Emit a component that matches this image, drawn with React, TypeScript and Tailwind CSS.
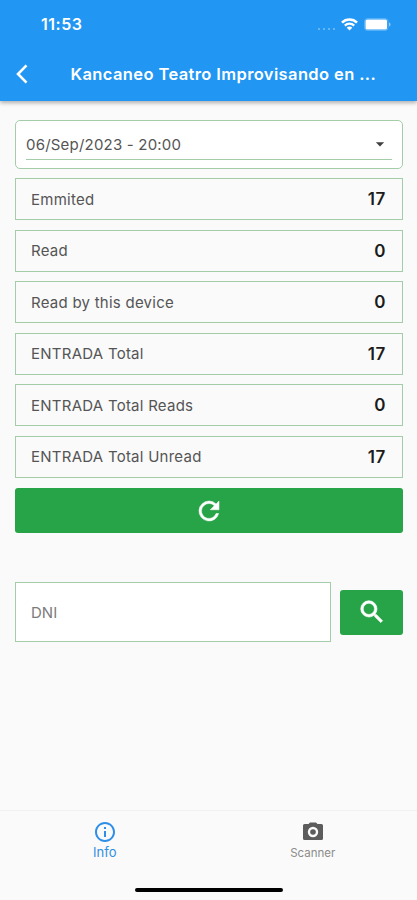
import React from 'react';
import { MdArrowDropDown, MdInfoOutline } from 'react-icons/md';

const stats = [
    { label: 'Emmited', value: 17 },
    { label: 'Read', value: 0 },
    { label: 'Read by this device', value: 0 },
    { label: 'ENTRADA Total', value: 17 },
    { label: 'ENTRADA Total Reads', value: 0 },
    { label: 'ENTRADA Total Unread', value: 17 },
];

const StatusBar = () => {
    return (
        <div className="flex h-12 items-center justify-between pl-[41px] pr-[26px]">
            <span className="text-[16px] leading-none font-semibold tracking-[0.5px]">11:53</span>
            <div className="flex items-center">
                <div className="mt-[9px] mr-[6px] flex gap-[3px]">
                    <i className="size-[2px] rounded-full bg-white/40" />
                    <i className="size-[2px] rounded-full bg-white/40" />
                    <i className="size-[2px] rounded-full bg-white/40" />
                    <i className="size-[2px] rounded-full bg-white/40" />
                </div>
                <svg className="mr-[6px] h-[13px] w-[17px]" viewBox="0 0 17 13" fill="none" stroke="currentColor">
                    <path d="M1 4.6a10.8 10.8 0 0 1 15 0" strokeWidth="2.6" />
                    <path d="M3.8 7.6a6.8 6.8 0 0 1 9.4 0" strokeWidth="2.2" />
                    <path d="M8.5 12.6 5.7 9.8a3.8 3.8 0 0 1 5.6 0z" fill="currentColor" stroke="none" />
                </svg>
                <svg className="h-[13px] w-[27px]" viewBox="0 0 27 13">
                    <rect x="0.5" y="0.5" width="23.5" height="12" rx="3" fill="none" stroke="#fff" strokeOpacity="0.25" />
                    <rect x="1.5" y="1.5" width="21.5" height="10" rx="1.5" fill="#fff" />
                    <path d="M25 4.5v4c1-.3 1.5-1 1.5-2s-.5-1.7-1.5-2z" fill="#fff" fillOpacity="0.5" />
                </svg>
            </div>
        </div>
    );
};

const Header = () => {
    return (
        <header className="h-[101px] bg-[#2196f3] text-white shadow-[0_2px_4px_rgba(0,0,0,0.3)]">
            <StatusBar />
            <div className="flex h-[52px] items-center pl-[15px]">
                <svg className="h-[20px] w-[13px]" viewBox="0 0 13 20" fill="none" stroke="currentColor" strokeWidth="2.6">
                    <path d="M11.5 1.3 3 10l8.5 8.7" />
                </svg>
                <h1 className="ml-[42.5px] text-[16.5px] font-semibold tracking-[0.38px] whitespace-nowrap">
                    Kancaneo Teatro Improvisando en ...
                </h1>
            </div>
        </header>
    );
};

const RefreshIcon = () => {
    return (
        <svg className="size-[30px]" viewBox="0 0 24 24" fill="currentColor" stroke="currentColor" strokeWidth="0.4">
            <path d="M17.65 6.35A7.96 7.96 0 0 0 12 4a8 8 0 1 0 7.73 10h-2.08A6 6 0 1 1 12 6c1.66 0 3.14.69 4.22 1.78L13 11h7V4z" />
        </svg>
    );
};

const SearchIcon = () => {
    return (
        <svg className="size-[30px]" viewBox="0 0 24 24" fill="currentColor" stroke="currentColor" strokeWidth="0.5">
            <path d="M15.5 14h-.79l-.28-.27A6.47 6.47 0 0 0 16 9.5 6.5 6.5 0 1 0 9.5 16c1.61 0 3.09-.59 4.23-1.57l.27.28v.79l5 4.99L20.49 19zm-6 0a4.5 4.5 0 1 1 0-9 4.5 4.5 0 0 1 0 9z" />
        </svg>
    );
};

const CameraIcon = () => {
    return (
        <svg className="size-6" viewBox="0 0 24 24" fill="currentColor">
            <path
                fillRule="evenodd"
                d="M9 2.5 7.5 4h-4A1.5 1.5 0 0 0 2 5.5v13A1.5 1.5 0 0 0 3.5 20h17a1.5 1.5 0 0 0 1.5-1.5v-13A1.5 1.5 0 0 0 20.5 4h-4L15 2.5zM12 6.8a5.2 5.2 0 1 1 0 10.4 5.2 5.2 0 0 1 0-10.4z"
            />
            <circle cx="12" cy="12" r="2.8" />
        </svg>
    );
};

const StatRow = ({ label, value }: { label: string; value: number }) => {
    return (
        <div className="flex h-[42px] items-center justify-between border border-[#a3cda8] pt-[1.5px] pr-[16px] pl-[15px]">
            <span className="text-[15px] tracking-[0.25px] text-[#555]">{label}</span>
            <span className="text-[17px] font-semibold tracking-[0.6px] text-[#1c1c1c]">{value}</span>
        </div>
    );
};

const App = () => {
    return (
        <div className="flex h-[900px] w-[417px] flex-col bg-[#fafafa] font-[Inter,sans-serif]">
            <Header />
            <main className="flex-1 pt-[19px] pr-[14px] pl-[15px]">
                <div className="h-[49px] rounded-[5px] border border-[#a3cda8] bg-white px-[10px] pt-[8px]">
                    <div className="flex h-[31px] items-center justify-between border-b border-[#a3cda8]">
                        <span className="pt-[2px] text-[15px] tracking-[0.2px] text-[#555]">06/Sep/2023 - 20:00</span>
                        <MdArrowDropDown className="mr-[2px] text-[#404040]" size={20} />
                    </div>
                </div>
                <div className="mt-[9px] grid gap-[9.5px]">
                    {stats.map((stat) => (
                        <StatRow key={stat.label} label={stat.label} value={stat.value} />
                    ))}
                </div>
                <button className="mt-[10.5px] flex h-[45px] w-full items-center justify-center rounded-[3px] bg-[#26a447] text-white">
                    <RefreshIcon />
                </button>
                <div className="mt-[49px] flex items-center gap-[9px]">
                    <input
                        className="h-[60px] w-[316px] border border-[#a3cda8] bg-white px-[15px] text-[15px] placeholder:text-[#7c7c7c]"
                        placeholder="DNI"
                    />
                    <button className="flex h-[45px] flex-1 items-center justify-center rounded-[3px] bg-[#26a447] text-white">
                        <SearchIcon />
                    </button>
                </div>
            </main>
            <nav className="flex h-[90px] flex-col border-t border-[#f1f1f1]">
                <div className="grid grid-cols-2 pt-[9px]">
                    <div className="flex flex-col items-center pl-px text-[#2f8fe6]">
                        <MdInfoOutline size={24} />
                        <span className="text-[13px] leading-4">Info</span>
                    </div>
                    <div className="flex flex-col items-center text-[#5c5c5c]">
                        <CameraIcon />
                        <span className="pt-px text-[11.5px] leading-4 text-[#8c8c8c]">Scanner</span>
                    </div>
                </div>
                <div className="mt-auto mr-auto mb-[8px] ml-[135px] h-[4px] w-[148px] rounded-full bg-black" />
            </nav>
        </div>
    );
};

export default App;
